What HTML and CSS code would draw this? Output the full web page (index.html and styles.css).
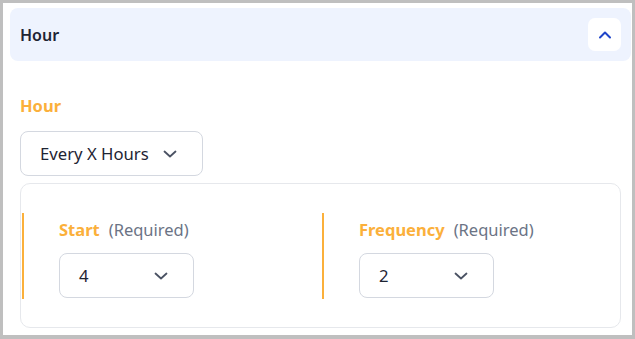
FILE: index.html
```html
<!DOCTYPE html>
<html lang="en">
<head>
  <meta charset="UTF-8">
  <meta name="viewport" content="width=device-width, initial-scale=1">
  <title>Hour</title>
  <link rel="stylesheet" href="styles.css">
</head>
<body>
  <div class="frame">
    <div class="section-head">
      <h3>Hour</h3>
      <button class="collapse-btn" aria-label="Collapse">
        <svg width="16" height="16" viewBox="0 0 16 16" fill="none" stroke="currentColor" stroke-width="2" stroke-linecap="round" stroke-linejoin="round"><path d="M3 10.5 8 5.5l5 5"/></svg>
      </button>
    </div>

    <div class="section-body">
      <div class="field-label">Hour</div>
      <div class="select select-wide">
        <span>Every X Hours</span>
        <svg class="chev" width="16" height="16" viewBox="0 0 16 16" fill="none" stroke="currentColor" stroke-width="1.8" stroke-linecap="round" stroke-linejoin="round"><path d="M2.5 5.5 8 10.5l5.5-5"/></svg>
      </div>

      <div class="card">
        <div class="col">
          <div class="col-label"><b>Start</b><span>(Required)</span></div>
          <div class="select select-small">
            <span>4</span>
            <svg class="chev" width="16" height="16" viewBox="0 0 16 16" fill="none" stroke="currentColor" stroke-width="1.8" stroke-linecap="round" stroke-linejoin="round"><path d="M2.5 5.5 8 10.5l5.5-5"/></svg>
          </div>
        </div>
        <div class="col">
          <div class="col-label"><b>Frequency</b><span>(Required)</span></div>
          <div class="select select-small">
            <span>2</span>
            <svg class="chev" width="16" height="16" viewBox="0 0 16 16" fill="none" stroke="currentColor" stroke-width="1.8" stroke-linecap="round" stroke-linejoin="round"><path d="M2.5 5.5 8 10.5l5.5-5"/></svg>
          </div>
        </div>
      </div>
    </div>
  </div>
</body>
</html>
```

FILE: styles.css
```css
:root {
  --orange: #fbb03b;
  --head-bg: #eef3fe;
  --text: #1e2433;
  --muted: #6b7385;
  --line: #d4d8e0;
  --card-line: #e6e8ec;
}

* {
  box-sizing: border-box;
  font-family: 'Noto Sans', sans-serif;
}

body {
  margin: 0;
  background: #fff;
}

.frame {
  width: 635px;
  height: 339px;
  border: 3px solid #bfbfbf;
  border-bottom-width: 4px;
  padding: 5px 1px 0 7px;
  background: #fff;
}

.section-head {
  height: 53px;
  background: var(--head-bg);
  border-radius: 8px;
  display: flex;
  align-items: center;
  justify-content: space-between;
  padding: 0 10px;
}

.section-head h3 {
  margin: 0;
  font-size: 16px;
  font-weight: 600;
  color: var(--text);
}

.collapse-btn {
  width: 33px;
  height: 33px;
  border: none;
  border-radius: 7px;
  background: #fff;
  color: #1f45c9;
  display: flex;
  align-items: center;
  justify-content: center;
  padding: 0;
}

.section-body {
  padding: 0 10px;
}

.field-label {
  margin-top: 34px;
  height: 22px;
  line-height: 22px;
  font-size: 16.5px;
  font-weight: 700;
  color: var(--orange);
}

.select {
  display: flex;
  align-items: center;
  justify-content: space-between;
  height: 45px;
  border: 1px solid var(--line);
  border-radius: 8px;
  padding: 0 24px 0 19px;
  font-size: 16.7px;
  color: var(--text);
  background: #fff;
}

.select-wide {
  width: 183px;
  margin-top: 14px;
}

.select-small {
  width: 135px;
}

.chev {
  color: #4a5263;
}

.card {
  margin-top: 7px;
  height: 145px;
  border: 1px solid var(--card-line);
  border-radius: 10px;
  padding: 29px 0 0 1px;
  display: grid;
  grid-template-columns: 300px 1fr;
  align-items: start;
}

.col {
  border-left: 2px solid var(--orange);
  padding: 6px 0 0 35px;
  height: 86px;
}

.col-label {
  height: 22px;
  line-height: 22px;
  font-size: 16.5px;
  margin-bottom: 12px;
}

.col-label b {
  color: var(--orange);
  font-weight: 700;
  margin-right: 9px;
}

.col-label span {
  color: var(--muted);
}
```
